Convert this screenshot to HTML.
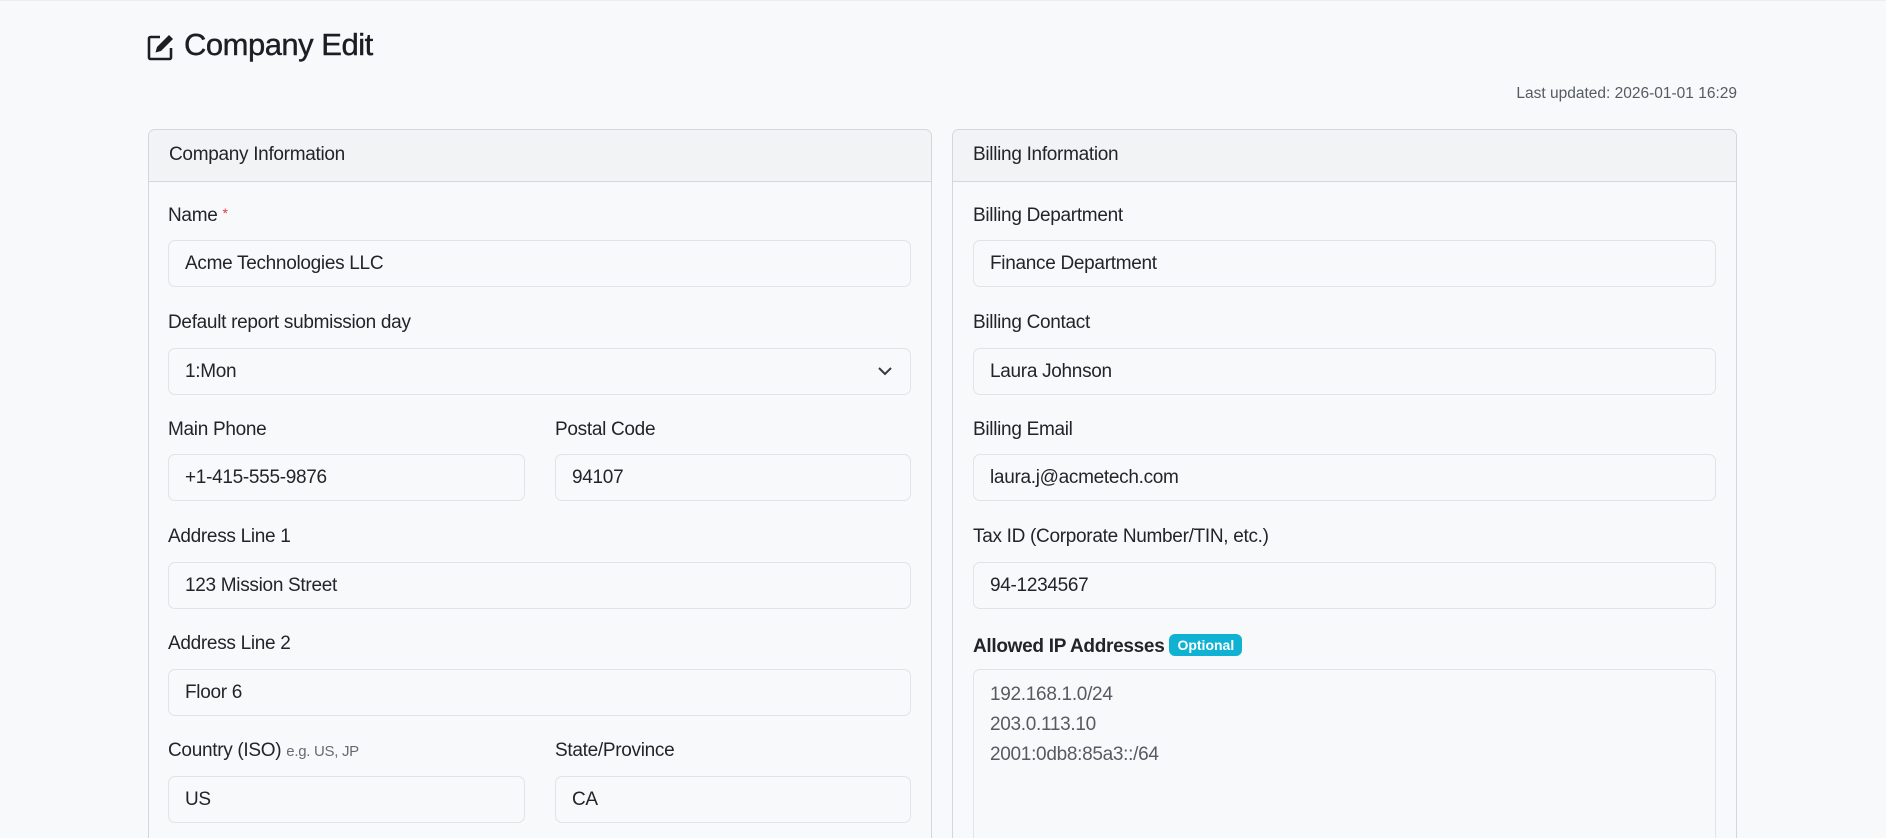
<!DOCTYPE html>
<html><head><meta charset="utf-8"><style>
*{box-sizing:border-box;margin:0;padding:0}
html,body{width:1886px;height:838px;overflow:hidden}
body{background:#f8f9fb;font-family:"Liberation Sans",sans-serif;color:#212529}
#w{position:relative;width:1886px;height:838px;overflow:hidden;border-top:1px solid #eceef1}
.abs{position:absolute}
h1{position:absolute;left:184px;top:26px;font-size:31px;font-weight:normal;letter-spacing:-0.5px;color:#1b1f23;-webkit-text-stroke:0.4px #1b1f23}
.upd{position:absolute;right:149px;top:84px;font-size:15.5px;color:#555b61}
.card{position:absolute;top:128px;height:760px;border:1px solid #d3d6da;border-radius:7px;background:#f8f9fb}
.card .hd{height:52px;background:#f2f3f5;border-bottom:1px solid #d3d6da;border-radius:7px 7px 0 0;font-size:19px;padding:14px 0 0 20px;letter-spacing:-0.3px}
.lbl{position:absolute;font-size:19px;letter-spacing:-0.3px;transform:translateY(-50%)}
.inp{position:absolute;height:47px;border:1px solid #e0e3e7;border-radius:7px;background:#f8f9fb;font-size:19px;padding:12px 0 0 16px;letter-spacing:-0.3px}
.req{color:#e03b3b;font-size:14px;vertical-align:top}
.hint{font-size:15px;color:#666c72}
.badge{display:inline-block;background:#10b2d4;color:#fff;font-size:14px;font-weight:bold;border-radius:6px;padding:3px 8px;vertical-align:2px;letter-spacing:0}
</style></head><body><div id="w">
<svg class="abs" style="left:147px;top:32px" width="28" height="28" viewBox="0 0 28 28"><path d="M13 4H3.5a1.5 1.5 0 0 0-1.5 1.5v19A1.5 1.5 0 0 0 3.5 26h19a1.5 1.5 0 0 0 1.5-1.5V15" fill="none" stroke="#1b1f23" stroke-width="2.6"/><path d="M22 2l4 4-12 12-5.5 1.5L10 14z" fill="#1b1f23"/></svg>
<h1>Company Edit</h1>
<div class="upd">Last updated: 2026-01-01 16:29</div>

<div class="card" style="left:148px;width:784px"><div class="hd">Company Information</div></div>
<div class="card" style="left:952px;width:785px"><div class="hd">Billing Information</div></div>

<div class="lbl" style="left:168px;top:215px">Name <span class="req">*</span></div>
<div class="inp" style="left:168px;top:239px;width:743px">Acme Technologies LLC</div>
<div class="lbl" style="left:168px;top:322px">Default report submission day</div>
<div class="inp" style="left:168px;top:347px;width:743px">1:Mon</div>
<svg class="abs" style="left:877px;top:364px" width="16" height="12" viewBox="0 0 16 12"><path d="M2 3l6 6 6-6" fill="none" stroke="#343a40" stroke-width="2"/></svg>
<div class="lbl" style="left:168px;top:429px">Main Phone</div>
<div class="inp" style="left:168px;top:453px;width:357px">+1-415-555-9876</div>
<div class="lbl" style="left:555px;top:429px">Postal Code</div>
<div class="inp" style="left:555px;top:453px;width:356px">94107</div>
<div class="lbl" style="left:168px;top:536px">Address Line 1</div>
<div class="inp" style="left:168px;top:561px;width:743px">123 Mission Street</div>
<div class="lbl" style="left:168px;top:643px">Address Line 2</div>
<div class="inp" style="left:168px;top:668px;width:743px">Floor 6</div>
<div class="lbl" style="left:168px;top:750px">Country (ISO) <span class="hint">e.g. US, JP</span></div>
<div class="inp" style="left:168px;top:775px;width:357px">US</div>
<div class="lbl" style="left:555px;top:750px">State/Province</div>
<div class="inp" style="left:555px;top:775px;width:356px">CA</div>

<div class="lbl" style="left:973px;top:215px">Billing Department</div>
<div class="inp" style="left:973px;top:239px;width:743px">Finance Department</div>
<div class="lbl" style="left:973px;top:322px">Billing Contact</div>
<div class="inp" style="left:973px;top:347px;width:743px">Laura Johnson</div>
<div class="lbl" style="left:973px;top:429px">Billing Email</div>
<div class="inp" style="left:973px;top:453px;width:743px">laura.j@acmetech.com</div>
<div class="lbl" style="left:973px;top:536px">Tax ID (Corporate Number/TIN, etc.)</div>
<div class="inp" style="left:973px;top:561px;width:743px">94-1234567</div>
<div class="lbl" style="left:973px;top:645px;font-weight:bold">Allowed IP Addresses <span class="badge">Optional</span></div>
<div class="inp" style="left:973px;top:668px;width:743px;height:220px;color:#555b61;line-height:30px;padding-top:10px">192.168.1.0/24<br>203.0.113.10<br>2001:0db8:85a3::/64</div>
</div></body></html>
